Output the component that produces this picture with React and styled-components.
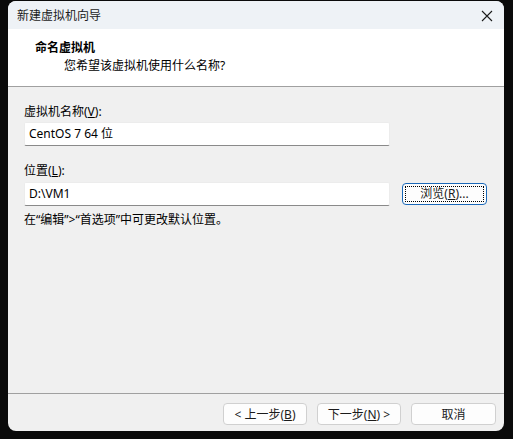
import React from 'react'
import styled, { createGlobalStyle } from 'styled-components'

const GlobalStyle = createGlobalStyle`
    html, body {
        margin: 0;
        padding: 0;
        background: #000;
        height: 100%;
    }
    body {
        font-family: "Noto Sans", "Noto Sans CJK SC", sans-serif;
        font-size: 12px;
        color: #000;
    }
`

const Page = styled.div`
    width: 513px;
    height: 439px;
    background: #0a0a0a;
    padding: 1px 0 0 8px;
    box-sizing: border-box;
`
const Window = styled.div`
    width: 496px;
    height: 430px;
    border-radius: 8px;
    overflow: hidden;
    display: flex;
    flex-direction: column;
    background: #f0f0f0;
`
const TitleBar = styled.div`
    height: 28px;
    flex-shrink: 0;
    background: #eef2f6;
    display: flex;
    align-items: center;
    justify-content: space-between;
    padding: 1px 9px 0;
    box-sizing: border-box;
    line-height: 16px;
    color: #1b1b1b;
`
const CloseButton = styled.div`
    width: 14px;
    height: 14px;
    display: flex;
    align-items: center;
    justify-content: center;
    margin-right: 1px;
`
const Header = styled.div`
    height: 58px;
    flex-shrink: 0;
    background: #fff;
    border-bottom: 1px solid #a0a0a0;
    padding: 11px 0 0 27px;
    box-sizing: border-box;
    display: flex;
    flex-direction: column;
    gap: 2px;
    line-height: 16px;
`
const HeaderTitle = styled.div`
    font-weight: bold;
`
const HeaderSub = styled.div`
    padding-left: 29px;
`
const Body = styled.div`
    flex: 1;
    padding: 17px 0 0 16px;
    display: flex;
    flex-direction: column;
    line-height: 16px;
`
const Label = styled.div`
    margin-top: ${p => p.$top || 0}px;
`
const Row = styled.div`
    display: flex;
    align-items: center;
    gap: 12px;
    margin-top: ${p => p.$top || 0}px;
`
const Field = styled.div`
    width: 366px;
    height: 24px;
    box-sizing: border-box;
    background: #fff;
    border: 1px solid #ececec;
    border-bottom: 1px solid #8a8a8a;
    border-radius: 2px;
    padding: 0 4px;
    display: flex;
    align-items: center;
`
const Note = styled.div`
    margin-top: 6px;
`
const Button = styled.div`
    width: ${p => p.$w || 84}px;
    height: 22px;
    box-sizing: border-box;
    background: #fdfdfd;
    border: 1px solid ${p => (p.$focus ? '#1a68b8' : '#d0d0d0')};
    border-radius: 4px;
    display: flex;
    align-items: center;
    justify-content: center;
    padding: 2px;
    color: #1b1b1b;
`
const FocusRing = styled.div`
    flex: 1;
    align-self: stretch;
    border: 1px dotted #000;
    display: flex;
    align-items: center;
    justify-content: center;
`
const Footer = styled.div`
    height: 38px;
    flex-shrink: 0;
    border-top: 1px solid #a0a0a0;
    box-sizing: border-box;
    display: flex;
    justify-content: flex-end;
    padding: 9px 8px 0 0;
    gap: 10px;
`

function App() {
    return (
        <Page>
            <GlobalStyle />
            <Window>
                <TitleBar>
                    <span>新建虚拟机向导</span>
                    <CloseButton>
                        <svg width="12" height="12" viewBox="0 0 12 12">
                            <path d="M1 1 L11 11 M11 1 L1 11" stroke="#1b1b1b" strokeWidth="1.1" />
                        </svg>
                    </CloseButton>
                </TitleBar>
                <Header>
                    <HeaderTitle>命名虚拟机</HeaderTitle>
                    <HeaderSub>您希望该虚拟机使用什么名称?</HeaderSub>
                </Header>
                <Body>
                    <Label>虚拟机名称(<u>V</u>):</Label>
                    <Row $top={2}>
                        <Field>CentOS 7 64 位</Field>
                    </Row>
                    <Label $top={17}>位置(<u>L</u>):</Label>
                    <Row $top={3}>
                        <Field>D:\VM1</Field>
                        <Button $w={85} $focus>
                            <FocusRing>浏览(<u>R</u>)...</FocusRing>
                        </Button>
                    </Row>
                    <Note>在“编辑”&gt;“首选项”中可更改默认位置。</Note>
                </Body>
                <Footer>
                    <Button>&lt; 上一步(<u>B</u>)</Button>
                    <Button>下一步(<u>N</u>) &gt;</Button>
                    <Button $w={85}>取消</Button>
                </Footer>
            </Window>
        </Page>
    )
}

export default App
